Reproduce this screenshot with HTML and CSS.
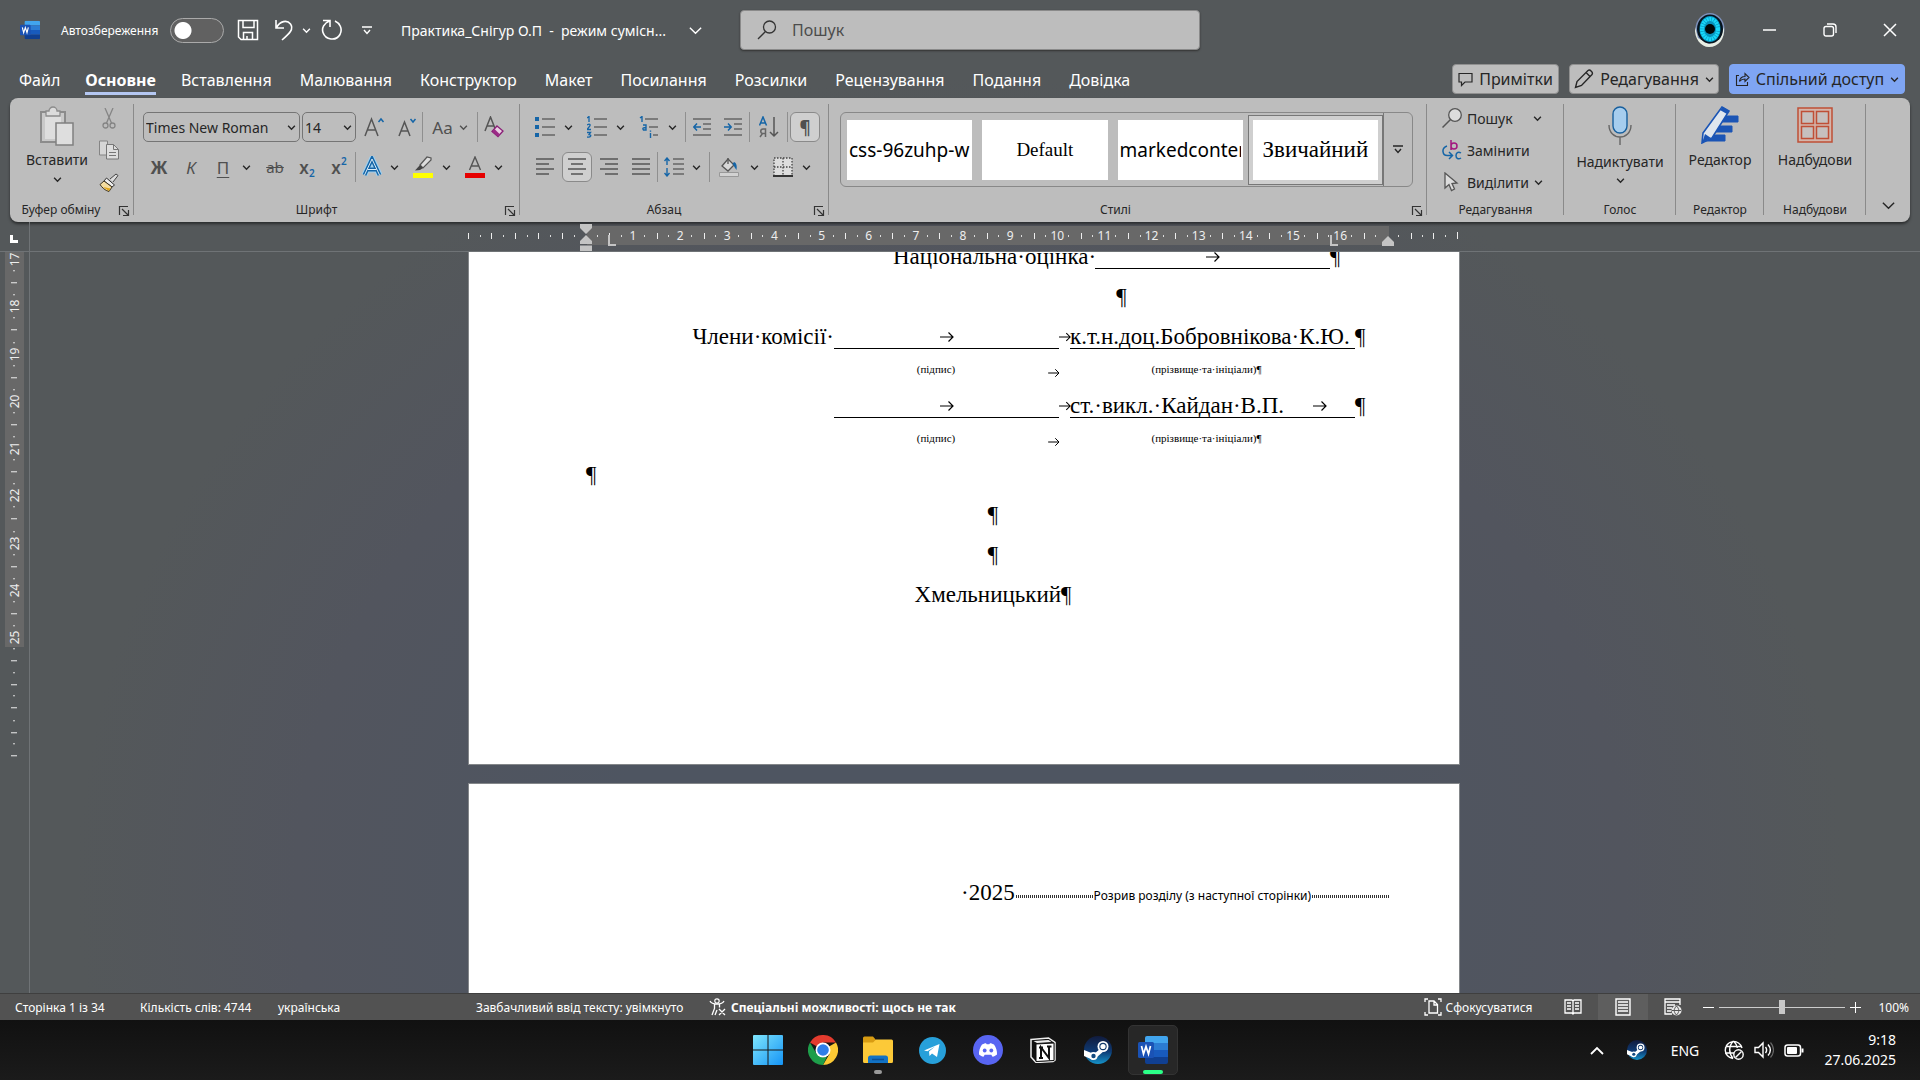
FILE: index.html
```html
<!DOCTYPE html>
<html lang="uk">
<head>
<meta charset="utf-8">
<title>Практика_Снігур О.П - Word</title>
<link rel="stylesheet" href="styles.css">
</head>
<body>
<svg class="sprite" aria-hidden="true">
  <symbol id="chev" viewBox="0 0 8 8"><path d="M1 2.5l3 3 3-3" fill="none" stroke="currentColor" stroke-width="1.4" vector-effect="non-scaling-stroke"/></symbol>
  <symbol id="launch" viewBox="0 0 12 12"><path d="M1.5 10V1.500H10M4 4l6 6M10.500 5v5.500H5" fill="none" stroke="currentColor" stroke-width="1.200"/></symbol>
  <symbol id="tab-arrow" viewBox="0 0 14 12"><path d="M0 6h13M8.500 1.500L13 6l-4.500 4.500" fill="none" stroke="currentColor" stroke-width="1.200"/></symbol>
  <symbol id="word" viewBox="0 0 30 28">
    <path d="M9 0h19a2 2 0 0 1 2 2v5H7V2a2 2 0 0 1 2-2z" fill="#41a5ee"/>
    <path d="M7 7h23v7H7z" fill="#2b7cd3"/><path d="M7 14h23v7H7z" fill="#185abd"/>
    <path d="M7 21h23v5a2 2 0 0 1-2 2H9a2 2 0 0 1-2-2z" fill="#103f91"/>
    <rect y="6" width="16" height="16" rx="1.500" fill="#1a52b5"/>
    <path d="M3.500 10l2 8 2.500-7.500L10.500 18l2-8" fill="none" stroke="#fff" stroke-width="1.700"/>
  </symbol>
  <symbol id="steam" viewBox="0 0 28 28">
    <linearGradient id="sg" x1="0" y1="0" x2="0" y2="1"><stop offset="0" stop-color="#111b3d"/><stop offset=".55" stop-color="#0e3a73"/><stop offset="1" stop-color="#1593c9"/></linearGradient>
    <circle cx="14" cy="14" r="14" fill="url(#sg)"/>
    <path d="M0 14l10 4 7-6 3 3-7 6-4 3-9-4z" fill="#fff"/>
    <circle cx="9.500" cy="20" r="4" fill="#fff"/><circle cx="9.500" cy="20" r="2.200" fill="#124a80"/>
    <circle cx="19" cy="10.500" r="5.500" fill="#fff"/><circle cx="19" cy="10.500" r="3.700" fill="#123a6c"/><circle cx="19" cy="10.500" r="2.600" fill="#fff"/>
  </symbol>
</svg>

<header class="titlebar">
  <svg class="app-icon" viewBox="0 0 30 28"><use href="#word"/></svg>
  <label class="autosave"><span>Автозбереження</span><input type="checkbox" class="switch"></label>
  <div class="quick">
    <button aria-label="Зберегти"><svg width="22" height="22" viewBox="0 0 22 22"><path d="M1.500 1.500h19v19H4l-2.500-2.500zM6 1.500v7h11v-7M6.500 20.500v-7h9v7M10 20v-3" fill="none" stroke="currentColor" stroke-width="1.500"/></svg></button>
    <button aria-label="Скасувати"><svg width="20" height="22" viewBox="0 0 20 22"><path d="M2 1v8h8M2.500 8.500C6 2 13 .5 16.500 5c3.500 5-.5 9-8.500 16" fill="none" stroke="currentColor" stroke-width="1.600"/></svg></button>
    <button class="narrow" aria-label="Список дій"><svg width="9" height="9"><use href="#chev"/></svg></button>
    <button class="redo" aria-label="Повторити"><svg width="22" height="22" viewBox="0 0 22 22"><path d="M2 1.500h7v6.500M8.500 2C3 4 .5 9 2 13.500c2.500 7.500 13 9 17 2C22 9.500 18.500 4 14 2" fill="none" stroke="currentColor" stroke-width="1.600"/></svg></button>
    <button class="customize" aria-label="Налаштувати панель"><svg width="10" height="9" viewBox="0 0 10 9"><path d="M0 1h10M2 4l3 3.500L8 4" fill="none" stroke="currentColor" stroke-width="1.400"/></svg></button>
  </div>
  <button class="doc-title"><span>Практика_Снігур О.П&nbsp; -&nbsp; режим сумісн...</span><svg width="15" height="15"><use href="#chev"/></svg></button>
  <label class="search"><svg width="20" height="20" viewBox="0 0 20 20"><circle cx="12.500" cy="7" r="6" fill="none" stroke="currentColor" stroke-width="1.300"/><path d="M8.500 11.500L1 19" stroke="currentColor" stroke-width="1.300"/></svg><input type="search" placeholder="Пошук" aria-label="Пошук"></label>
  <div class="window-tools">
    <button class="avatar" aria-label="Обліковий запис"><svg width="32" height="36" viewBox="0 0 32 36"><ellipse cx="16" cy="17" rx="14.500" ry="16" fill="#7c90ba"/><path d="M1 15c-1 12 6 20 14 20 10 0 16-8 15-20l-4 12-11 5L4 26z" fill="#e9eee4"/><ellipse cx="16" cy="17" rx="13" ry="14.500" fill="#06141e"/><ellipse cx="16" cy="17" rx="10.500" ry="13" fill="#0793be"/><ellipse cx="16" cy="17" rx="8" ry="10" fill="none" stroke="#18d8fa" stroke-width="4" stroke-dasharray="2 .6"/><circle cx="16" cy="17" r="5" fill="#010708"/></svg></button>
    <button aria-label="Згорнути"><svg width="14" height="14"><path d="M0 7h13" stroke="currentColor" stroke-width="1.500"/></svg></button>
    <button aria-label="Відновити"><svg width="14" height="14" viewBox="0 0 14 14"><rect x="1" y="3.500" width="9.500" height="9.500" rx="2" fill="none" stroke="currentColor" stroke-width="1.400"/><path d="M4 1h6a3 3 0 0 1 3 3v6" fill="none" stroke="currentColor" stroke-width="1.400"/></svg></button>
    <button aria-label="Закрити"><svg width="14" height="14"><path d="M1 1l12 12M13 1L1 13" stroke="currentColor" stroke-width="1.500"/></svg></button>
  </div>
</header>

<nav class="tabs">
  <div class="tab-list">
    <a href="#">Файл</a><a href="#" class="active">Основне</a><a href="#">Вставлення</a><a href="#">Малювання</a><a href="#">Конструктор</a><a href="#">Макет</a><a href="#">Посилання</a><a href="#">Розсилки</a><a href="#">Рецензування</a><a href="#">Подання</a><a href="#">Довідка</a>
  </div>
  <div class="tab-actions">
    <button class="comments"><svg width="15" height="15" viewBox="0 0 15 15"><path d="M1 1.500h13v8.500H7l-3.500 3.500V10H1z" fill="none" stroke="currentColor" stroke-width="1.200"/></svg>Примітки</button>
    <button class="editing"><svg width="20" height="20" viewBox="0 0 20 20"><path d="M1.500 18.500l1.500-6L14 1.500c2-1.500 5.500 2 4 4L7.500 16.500zM12 3.500L16.500 8" fill="none" stroke="currentColor" stroke-width="1.400"/></svg>Редагування<svg width="9" height="9"><use href="#chev"/></svg></button>
    <button class="share"><svg width="15" height="15" viewBox="0 0 15 15"><path d="M4 3.500H1.500v10h11V10M4.500 9.500C5 6 7 4.500 10 4.500V1.500L14 5.500l-4 4V7C7.500 7 6 7.500 4.500 9.500z" fill="none" stroke="currentColor" stroke-width="1.100"/></svg>Спільний доступ<svg width="9" height="9"><use href="#chev"/></svg></button>
  </div>
</nav>

<section class="ribbon">
  <div class="group g-clip">
    <div class="clip-body">
      <button class="paste"><svg width="36" height="40" viewBox="0 0 36 40"><path d="M2 6h24v30H2z" fill="#c9c9c9" stroke="#8c8c8c" stroke-width="2"/><path d="M6 9h16v24H6z" fill="#dedede"/><path d="M7 10V5h3a4 4 0 0 1 8 0h3v5z" fill="#dcdcdc" stroke="#8c8c8c" stroke-width="1.300"/><path d="M17 17h17v22H17z" fill="#dedede" stroke="#808080" stroke-width="1.500"/></svg><span>Вставити</span><svg width="9" height="9"><use href="#chev"/></svg></button>
      <div class="clip-tools">
        <button aria-label="Вирізати"><svg width="14" height="21" viewBox="0 0 14 21"><path d="M3 0l6.500 15M11 0L4.500 15" stroke="#858585" stroke-width="1.300"/><circle cx="3.500" cy="17.500" r="2.500" fill="none" stroke="#858585" stroke-width="1.300"/><circle cx="10.500" cy="17.500" r="2.500" fill="none" stroke="#858585" stroke-width="1.300"/></svg></button>
        <button aria-label="Копіювати"><svg width="22" height="20" viewBox="0 0 22 20"><path d="M1.500 1h8v14h-8z" fill="#d6d6d6" stroke="#858585"/><path d="M8.500 4.500h7l5 5v9.500h-12z" fill="#dedede" stroke="#777"/><path d="M15.500 4.500v5h5M11 12.500h7M11 15.500h7" fill="none" stroke="#777"/></svg></button>
        <button aria-label="Формат за зразком"><svg width="20" height="19" viewBox="0 0 20 19"><path d="M11 6l6-5 2 1.500-5 6.500" fill="#ddd" stroke="#444"/><path d="M7.500 5l8 7-2.500 2-8-6z" fill="#eee" stroke="#333"/><path d="M5 8l8 6-3 4.500c-4-1-7-4-9-7z" fill="#f3dca0" stroke="#3c3320"/><path d="M4 14l6 4 1.500-2.500z" fill="#e0a51a"/></svg></button>
      </div>
    </div>
    <div class="caption"><span>Буфер обміну</span><button aria-label="Буфер обміну"><svg width="12" height="12"><use href="#launch"/></svg></button></div>
  </div>

  <div class="group g-font">
    <div class="tool-row">
      <label class="combo font-name"><select aria-label="Шрифт"><option>Times New Roman</option></select><svg width="9" height="9"><use href="#chev"/></svg></label>
      <label class="combo font-size"><select aria-label="Розмір"><option>14</option></select><svg width="9" height="9"><use href="#chev"/></svg></label>
      <button class="t" aria-label="Збільшити"><svg width="22" height="22" viewBox="0 0 22 22"><path d="M2 20L8.500 3 15 20M4.500 14h8" fill="none" stroke="#555" stroke-width="1.500"/><path d="M15.500 6l2.500-3 2.500 3" fill="none" stroke="#1565a7" stroke-width="1.500"/></svg></button>
      <button class="t" aria-label="Зменшити"><svg width="22" height="22" viewBox="0 0 22 22"><path d="M4 20L9.500 6 15 20M6 15h7" fill="none" stroke="#555" stroke-width="1.500"/><path d="M15.500 3l2.500 3 2.500-3" fill="none" stroke="#1565a7" stroke-width="1.500"/></svg></button>
      <button class="t case sep">Aa<svg width="9" height="9"><use href="#chev"/></svg></button>
      <button class="t sep" aria-label="Очистити"><svg width="22" height="22" viewBox="0 0 22 22"><path d="M2 15L7.500 1 13 15M4 10h7" fill="none" stroke="#555" stroke-width="1.500"/><path d="M14 10l6 5-5 5.500-6-5z" fill="#e8cfe2" stroke="#8a1f77" stroke-width="1.300"/><path d="M11.500 13l5 5-2 2.500-5-5z" fill="#9b2a86"/></svg></button>
    </div>
    <div class="tool-row">
      <button class="t bold">Ж</button><button class="t ital">К</button><button class="t under">П</button><button class="c" aria-label="Підкреслення"><svg width="9" height="9"><use href="#chev"/></svg></button>
      <button class="t strike">ab</button><button class="t script">x<sub>2</sub></button><button class="t script">x<sup>2</sup></button>
      <button class="t sep" aria-label="Текстові ефекти"><svg width="20" height="22" viewBox="0 0 20 22"><path d="M2.500 19L10 3l7.500 16M5.500 13.500h9" fill="none" stroke="#9ed0f0" stroke-width="6"/><path d="M2.500 19L10 3l7.500 16M5.500 13.500h9" fill="none" stroke="#1565a7" stroke-width="3.800"/><path d="M2.500 19L10 3l7.500 16M5.500 13.500h9" fill="none" stroke="#dcecf6" stroke-width="1"/></svg></button><button class="c" aria-label="Ефекти"><svg width="9" height="9"><use href="#chev"/></svg></button>
      <button class="t" aria-label="Виділення"><svg width="20" height="22" viewBox="0 0 20 22"><path d="M7 9l7-8 4 1v2l-8 8z" fill="#ddd" stroke="#555" stroke-width="1.200"/><path d="M7 9l3 3-3 2-5 .5z" fill="#444"/><path d="M0 17h20v5H0z" fill="#ff0"/></svg></button><button class="c" aria-label="Колір виділення"><svg width="9" height="9"><use href="#chev"/></svg></button>
      <button class="t" aria-label="Колір тексту"><svg width="20" height="22" viewBox="0 0 20 22"><path d="M4.500 14L10 1l5.500 13M6.500 10h7" fill="none" stroke="#555" stroke-width="1.400"/><path d="M0 17h20v5H0z" fill="#e60000"/></svg></button><button class="c" aria-label="Вибір кольору"><svg width="9" height="9"><use href="#chev"/></svg></button>
    </div>
    <div class="caption"><span>Шрифт</span><button aria-label="Шрифт"><svg width="12" height="12"><use href="#launch"/></svg></button></div>
  </div>

  <div class="group g-para">
    <div class="tool-row">
      <button class="t" aria-label="Маркери"><svg width="20" height="20" viewBox="0 0 20 20"><path d="M0 0h4v4H0zM0 8h4v4H0zM0 16h4v4H0z" fill="#1565a7"/><path d="M7 2h13M7 10h13M7 18h13" stroke="#666" stroke-width="1.500"/></svg></button><button class="c" aria-label="Маркери"><svg width="9" height="9"><use href="#chev"/></svg></button>
      <button class="t" aria-label="Нумерація"><svg width="20" height="22" viewBox="0 0 20 22"><path d="M0 2l2-1.500V6M0 9c3-2 4 0 2 2l-2 2.500h4M0 16.500h3.500L2 18.500c3 0 2 3.500-2 2.500" fill="none" stroke="#1565a7" stroke-width="1.300"/><path d="M7 3h13M7 11h13M7 19h13" stroke="#666" stroke-width="1.500"/></svg></button><button class="c" aria-label="Нумерація"><svg width="9" height="9"><use href="#chev"/></svg></button>
      <button class="t" aria-label="Багаторівневий"><svg width="20" height="22" viewBox="0 0 20 22"><path d="M1 2l2-1.500V6M4 9h3v5H4.500c-1.500-2 0-2.500 2.500-2.500M11.500 17v5M11.500 14.500v1.200" fill="none" stroke="#1565a7" stroke-width="1.400"/><path d="M6 3h13M10 11h9M14 19h5" stroke="#666" stroke-width="1.500"/></svg></button><button class="c" aria-label="Багаторівневий"><svg width="9" height="9"><use href="#chev"/></svg></button>
      <button class="t sep" aria-label="Зменшити відступ"><svg width="18" height="18" viewBox="0 0 18 18"><path d="M0 1h18M10 6h8M10 11h8M0 17h18" stroke="#666" stroke-width="1.500"/><path d="M8 9H1M4 5.500L.8 9 4 12.500" fill="none" stroke="#1565a7" stroke-width="1.500"/></svg></button>
      <button class="t" aria-label="Збільшити відступ"><svg width="18" height="18" viewBox="0 0 18 18"><path d="M0 1h18M10 6h8M10 11h8M0 17h18" stroke="#666" stroke-width="1.500"/><path d="M0 9h7M4 5.500L7.200 9 4 12.500" fill="none" stroke="#1565a7" stroke-width="1.500"/></svg></button>
      <button class="t sep wide" aria-label="Сортування"><svg width="20" height="22" viewBox="0 0 20 22"><path d="M.5 9.500L4 1l3.500 8.500M2 7h4" fill="none" stroke="#1565a7" stroke-width="1.500"/><path d="M6.500 21v-8H4c-3 0-3 4.500 0 4.500h2.500M3.500 17.500L1 21" fill="none" stroke="#666" stroke-width="1.500"/><path d="M15 1v19M11 16l4 4 4-4" fill="none" stroke="#555" stroke-width="1.500"/></svg></button>
      <button class="t sep pilcrow"><span class="pressed">¶</span></button>
    </div>
    <div class="tool-row">
      <button class="t" aria-label="Ліворуч"><svg width="18" height="18"><path d="M0 1h18M0 6h13M0 11h18M0 16h13" stroke="#555" stroke-width="1.500"/></svg></button>
      <button class="t" aria-label="По центру"><span class="pressed"><svg width="18" height="18"><path d="M0 1h18M3 6h12M0 11h18M3 16h12" stroke="#555" stroke-width="1.500"/></svg></span></button>
      <button class="t" aria-label="Праворуч"><svg width="18" height="18"><path d="M0 1h18M5 6h13M0 11h18M5 16h13" stroke="#555" stroke-width="1.500"/></svg></button>
      <button class="t" aria-label="За шириною"><svg width="18" height="18"><path d="M0 1h18M0 6h18M0 11h18M0 16h18" stroke="#555" stroke-width="1.500"/></svg></button>
      <button class="t sep" aria-label="Інтервал"><svg width="20" height="20" viewBox="0 0 20 20"><path d="M9 2h11M9 7h11M9 12h11M9 17h11" stroke="#666" stroke-width="1.500"/><path d="M3 1v7M.5 4L3 1l2.500 3M3 11v8M.5 16L3 19l2.500-3" fill="none" stroke="#1565a7" stroke-width="1.400"/></svg></button><button class="c" aria-label="Інтервал"><svg width="9" height="9"><use href="#chev"/></svg></button>
      <button class="t sep wide" aria-label="Заливка"><svg width="20" height="20" viewBox="0 0 20 20"><path d="M9 2l6 6-6 6-6-5z" fill="#d8d8d8" stroke="#555" stroke-width="1.300"/><path d="M9 1v6" stroke="#555" stroke-width="1.300"/><path d="M15 5c3 1 3 5 2.500 8-2-2-2.500-5-4-6z" fill="#1565a7"/><path d="M.5 15.500h19v4H.5z" fill="#d2d2d2" stroke="#999"/></svg></button><button class="c" aria-label="Заливка"><svg width="9" height="9"><use href="#chev"/></svg></button>
      <button class="t" aria-label="Межі"><svg width="20" height="20" viewBox="0 0 20 20"><path d="M1 1h18v18H1z" fill="#ddd"/><path d="M1 19V1h18v18M10 1v18M1 10h18" fill="none" stroke="#444" stroke-width="1.300" stroke-dasharray="1.500 1.500"/><path d="M0 19h20" stroke="#333" stroke-width="2"/></svg></button><button class="c" aria-label="Межі"><svg width="9" height="9"><use href="#chev"/></svg></button>
    </div>
    <div class="caption"><span>Абзац</span><button aria-label="Абзац"><svg width="12" height="12"><use href="#launch"/></svg></button></div>
  </div>

  <div class="group g-styles">
    <div class="gallery">
      <button class="style sans"><span>css-96zuhp-w</span></button>
      <button class="style centered small"><span>Default</span></button>
      <button class="style sans"><span>markedcontent</span></button>
      <button class="style centered selected"><span>Звичайний</span></button>
      <button class="more" aria-label="Більше стилів"><svg width="10" height="9" viewBox="0 0 10 9"><path d="M0 1h10M2 4l3 3.500L8 4" fill="none" stroke="currentColor" stroke-width="1.400"/></svg></button>
    </div>
    <div class="caption"><span>Стилі</span><button aria-label="Стилі"><svg width="12" height="12"><use href="#launch"/></svg></button></div>
  </div>

  <div class="group g-edit">
    <div class="edit-list">
      <button><svg width="20" height="20" viewBox="0 0 20 20"><circle cx="13" cy="7" r="6.300" fill="#dcdcdc" stroke="#555" stroke-width="1.300"/><path d="M8.500 11.500L.5 19.500" stroke="#555" stroke-width="1.500"/></svg><span>Пошук</span><svg class="far" width="9" height="9"><use href="#chev"/></svg></button>
      <button><svg width="20" height="20" viewBox="0 0 20 20"><path d="M9 0v10M9 6c0-4 6-4 6 0s-6 4-6 0" fill="none" stroke="#a3177f" stroke-width="1.500"/><path d="M19 13c-3-2-5 0-5 2.500s2 4.500 5 2.500M5 6C-1 8 0 16 6 15.500h4M7 12l3.500 3.500L7 19" fill="none" stroke="#1565a7" stroke-width="1.500"/></svg><span>Замінити</span></button>
      <button><svg width="20" height="20" viewBox="0 0 20 20"><path d="M3 1v15l4-3.500 2.500 6 3-1.500-2.500-5.500 5-.5z" fill="#dcdcdc" stroke="#555" stroke-width="1.300"/></svg><span>Виділити</span><svg width="9" height="9"><use href="#chev"/></svg></button>
    </div>
    <div class="caption"><span>Редагування</span></div>
  </div>
  <div class="group g-voice">
    <button class="big"><svg width="24" height="40" viewBox="0 0 24 40"><rect x="5" y="1" width="14" height="26" rx="7" fill="#a6cdee" stroke="#175f9d" stroke-width="1.400"/><path d="M1 19c0 16 22 16 22 0M12 31v8" fill="none" stroke="#666" stroke-width="1.400"/></svg><span>Надиктувати</span><svg width="9" height="9"><use href="#chev"/></svg></button>
    <div class="caption"><span>Голос</span></div>
  </div>
  <div class="group g-editor">
    <button class="big"><svg width="40" height="38" viewBox="0 0 40 38"><path d="M20 10h18v6H14zM17 20h15v6H10zM11 29h14v6H6z" fill="#1b55b5" stroke="#1b55b5" stroke-linejoin="round"/><path d="M3 27L22 1l7 4-17 27-10 5z" fill="#dfe6ee" stroke="#1b55b5" stroke-width="1.600"/><path d="M2 37l3-9 6 4zM20 4l3-3 6 4-2 3z" fill="#1b55b5"/></svg><span>Редактор</span></button>
    <div class="caption"><span>Редактор</span></div>
  </div>
  <div class="group g-addins">
    <button class="big"><svg width="38" height="38" viewBox="0 0 38 38"><path d="M2 2h34v34H2z" fill="#d4b5ab" stroke="#bf4f36" stroke-width="1.500"/><path d="M5.500 5.500h12v12h-12zM20.500 5.500h12v12h-12zM5.500 20.500h12v12h-12zM20.500 20.500h12v12h-12z" fill="#c6c0be" stroke="#bf4f36" stroke-width="1.500"/></svg><span>Надбудови</span></button>
    <div class="caption"><span>Надбудови</span></div>
  </div>
  <button class="collapse" aria-label="Згорнути стрічку"><svg width="15" height="15"><use href="#chev"/></svg></button>
</section>

<main class="workspace">
  <div class="corner"><i></i></div>
  <div class="ruler-bar">
    <div class="ruler">
      <span class="blank"></span><span class="blank"></span><span></span><span>1</span><span>2</span><span>3</span><span>4</span><span>5</span><span>6</span><span>7</span><span>8</span><span>9</span><span>10</span><span>11</span><span>12</span><span>13</span><span>14</span><span>15</span><span>16</span><span></span><span class="blank last"></span>
      <svg class="mark indent-left" width="12" height="27" viewBox="0 0 12 27"><path d="M0 0h12v4l-6 6-6-6zM0 20v-3l6-6 6 6v3zM0 21.500h12V27H0z" fill="#c4c4c4"/></svg>
      <svg class="mark tab-a" width="8" height="12"><path d="M1 0v10h7" fill="none" stroke="#c4c4c4" stroke-width="2"/></svg>
      <svg class="mark tab-b" width="8" height="12"><path d="M1 0v10h7" fill="none" stroke="#c4c4c4" stroke-width="2"/></svg>
      <svg class="mark indent-right" width="12" height="10"><path d="M0 10V6l6-6 6 6v4z" fill="#c4c4c4"/></svg>
    </div>
  </div>
  <div class="vruler-bar">
    <div class="vruler"><span>17</span><span>18</span><span>19</span><span>20</span><span>21</span><span>22</span><span>23</span><span>24</span><span>25</span><span class="blank"></span><span class="blank"></span></div>
  </div>
  <div class="canvas">
    <article class="sheet first">
      <div class="line grade"><span>Національна·оцінка·</span><u class="field"><svg width="14" height="12"><use href="#tab-arrow"/></svg></u><span>¶</span></div>
      <div class="line mid-right">¶</div>
      <div class="line sign"><span>Члени·комісії·</span><u class="field"><svg width="14" height="12"><use href="#tab-arrow"/></svg></u><svg width="12" height="12"><use href="#tab-arrow"/></svg><span class="name">к.т.н.доц.Бобровнікова·К.Ю.</span><span>¶</span></div>
      <div class="line note"><span>(підпис)</span><svg width="12" height="10"><use href="#tab-arrow"/></svg><span>(прізвище·та·ініціали)¶</span></div>
      <div class="line sign"><span></span><u class="field"><svg width="14" height="12"><use href="#tab-arrow"/></svg></u><svg width="12" height="12"><use href="#tab-arrow"/></svg><span class="name">ст.·викл.·Кайдан·В.П.<svg width="14" height="12"><use href="#tab-arrow"/></svg></span><span>¶</span></div>
      <div class="line note"><span>(підпис)</span><svg width="12" height="10"><use href="#tab-arrow"/></svg><span>(прізвище·та·ініціали)¶</span></div>
      <div class="line">¶</div>
      <div class="line center">¶</div>
      <div class="line center">¶</div>
      <div class="line center">Хмельницький¶</div>
    </article>
    <article class="sheet second">
      <div class="line break"><span>·2025</span><i></i><small>Розрив розділу (з наступної сторінки)</small><i></i></div>
    </article>
  </div>
</main>

<footer class="status">
  <button class="s-page">Сторінка 1 із 34</button>
  <button class="s-words">Кількість слів: 4744</button>
  <button class="s-lang">українська</button>
  <button class="s-pred">Завбачливий ввід тексту: увімкнуто</button>
  <button class="s-access"><svg width="18" height="18" viewBox="0 0 18 18"><circle cx="8" cy="3" r="2.200" fill="none" stroke="currentColor" stroke-width="1.200"/><path d="M1 3c2 4 12 4 14 0M5.500 6.500v4L3 17M10.500 6.500v3M6 17l2-5M10 11l6 6M16 11l-6 6" fill="none" stroke="currentColor" stroke-width="1.300"/></svg>Спеціальні можливості: щось не так</button>
  <div class="status-right">
    <button class="focus"><svg width="18" height="18" viewBox="0 0 18 18"><path d="M1 4V1h3M14 1h3v3M17 14v3h-3M4 17H1v-3M5 3h5l3.500 3.500V15H5zM10 3v4h3.500" fill="none" stroke="currentColor" stroke-width="1.300"/></svg>Сфокусуватися</button>
    <button class="view" aria-label="Читання"><svg width="18" height="16" viewBox="0 0 18 16"><path d="M1 1h7l1 1 1-1h7v13h-7l-1 1-1-1H1zM9 2v12M3 4h4M3 7h4M3 10h4M11 4h4M11 7h4M11 10h4" fill="none" stroke="currentColor" stroke-width="1.300"/></svg></button>
    <button class="view on" aria-label="Розмітка"><svg width="16" height="18" viewBox="0 0 16 18"><path d="M1 1h14v16H1zM3 4h10M3 7h10M3 10h10M3 13h10" fill="none" stroke="currentColor" stroke-width="1.400"/></svg></button>
    <button class="view" aria-label="Веб"><svg width="18" height="18" viewBox="0 0 18 18"><path d="M8 16H1V1h15v6M1 4h15M3 7h8M3 10h5M3 13h4" fill="none" stroke="currentColor" stroke-width="1.300"/><circle cx="12.500" cy="12.500" r="5" fill="#e8e8e8"/><path d="M8 12.500h9M12.500 8c-3 3-3 6 0 9 3-3 3-6 0-9" fill="none" stroke="#555"/></svg></button>
    <button class="zoom-step" aria-label="Зменшити масштаб"><svg width="11" height="11"><path d="M0 5.500h11" stroke="currentColor"/></svg></button>
    <input type="range" class="zoom" min="0" max="100" value="50" aria-label="Масштаб">
    <button class="zoom-step" aria-label="Збільшити масштаб"><svg width="11" height="11"><path d="M0 5.500h11M5.500 0v11" stroke="currentColor"/></svg></button>
    <button class="percent">100%</button>
  </div>
</footer>

<div class="taskbar">
  <div class="apps">
    <button aria-label="Пуск"><svg width="30" height="30" viewBox="0 0 30 30"><linearGradient id="wg" x1="0" y1="0" x2="1" y2="1"><stop offset="0" stop-color="#7fe6fd"/><stop offset="1" stop-color="#1594f5"/></linearGradient><path d="M0 1a1 1 0 0 1 1-1h13.500v14.500H0zM15.500 0H29a1 1 0 0 1 1 1v13.500H15.500zM0 15.500h14.500V30H1a1 1 0 0 1-1-1zM15.500 15.500H30V29a1 1 0 0 1-1 1H15.500z" fill="url(#wg)"/></svg></button>
    <button aria-label="Chrome"><svg width="30" height="30" viewBox="0 0 30 30"><path d="M15 15L2 7.500A15 15 0 0 1 28 7.500H15z" fill="#e33b2e"/><path d="M15 15L28 7.500A15 15 0 0 1 15 30l6.500-11z" fill="#fcc934"/><path d="M15 30A15 15 0 0 1 2 7.500L8.500 18.800 15 22.500l4-1z" fill="#1e9e4a"/><circle cx="15" cy="15" r="7.500" fill="#fff"/><circle cx="15" cy="15" r="5.800" fill="#2f7de9"/></svg></button>
    <button class="running" aria-label="Провідник"><svg width="30" height="28" viewBox="0 0 30 28"><path d="M0 2a1.500 1.500 0 0 1 1.500-1.500H10l3 3.500v5H0z" fill="#d89c12"/><path d="M0 6.500h10l3-3h15.500A1.500 1.500 0 0 1 30 5v20.500a1.500 1.500 0 0 1-1.500 1.500h-27A1.500 1.500 0 0 1 0 25.500z" fill="#fcc938"/><path d="M5 27v-5a2.500 2.500 0 0 1 2.500-2.500h15A2.500 2.500 0 0 1 25 22v5z" fill="#1272c4"/><path d="M9 23.500h12" stroke="#0b4f94" stroke-width="1.500"/></svg></button>
    <button aria-label="Telegram"><svg width="27" height="27" viewBox="0 0 27 27"><circle cx="13.500" cy="13.500" r="13.500" fill="#27a0da"/><path d="M5 13.500L20.500 7 18 20l-5-3.500-2.500 2.500-.5-4.500 6-5-7.500 4.800z" fill="#fff"/></svg></button>
    <button aria-label="Discord"><svg width="30" height="30" viewBox="0 0 30 30"><circle cx="15" cy="15" r="15" fill="#5865f2"/><path d="M9 9.500c2-1 3-1.300 4-1.300l.7 1.100h2.600l.7-1.100c1 0 2 .3 4 1.300 2 3 3.300 6.500 3 10-1.500 1.200-3 2-4.500 2.200l-1.200-1.900h-6.600l-1.200 1.900C9 21.500 7.500 20.700 6 19.500c-.3-3.500 1-7 3-10z" fill="#fff"/><circle cx="11.700" cy="15.500" r="1.900" fill="#5865f2"/><circle cx="18.300" cy="15.500" r="1.900" fill="#5865f2"/></svg></button>
    <button aria-label="Notion"><svg width="26" height="26" viewBox="0 0 26 26"><path d="M1 2.500L18.500 1 25 5.500V23l-2 1.500L6 25.500 1 20z" fill="#111" stroke="#eee" stroke-width="1.500"/><path d="M6 7l18-1v17.500L6 24.500z" fill="#fff" stroke="#111"/><path d="M9 10.500h4M11 20.500V10.500l8 10.500V9.500M17 9.500h4.500M9 21h4" fill="none" stroke="#111" stroke-width="2"/><path d="M3.500 4l15-1 3 2L7 6z" fill="#eee"/></svg></button>
    <button aria-label="Steam"><svg width="28" height="28"><use href="#steam"/></svg></button>
    <button class="current" aria-label="Word"><svg width="30" height="28"><use href="#word"/></svg></button>
  </div>
  <div class="tray">
    <button class="t-up" aria-label="Показати приховані"><svg width="14" height="9" viewBox="0 0 14 9"><path d="M1 8l6-6 6 6" fill="none" stroke="currentColor" stroke-width="1.800"/></svg></button>
    <button class="t-steam" aria-label="Steam"><svg width="20" height="20" viewBox="0 0 28 28"><use href="#steam"/></svg></button>
    <button class="t-lang">ENG</button>
    <button class="t-net" aria-label="Мережа, звук, батарея">
      <svg width="20" height="20" viewBox="0 0 20 20"><path d="M18 8a8.500 8.500 0 1 0-9 10.500M1.500 6.500h16M1 13h9M9.500 1c-5 5-5 12-.5 17.500M9.500 1c2 2 3.500 4.500 3.800 7" fill="none" stroke="currentColor" stroke-width="1.400"/><circle cx="14.500" cy="14.500" r="4.700" fill="none" stroke="currentColor" stroke-width="1.400"/><path d="M11.500 17.500l6-6" stroke="currentColor" stroke-width="1.400"/></svg>
      <svg width="20" height="18" viewBox="0 0 20 18"><path d="M1 6.500h3.500L9 2v14l-4.500-4.500H1z" fill="none" stroke="currentColor" stroke-width="1.400"/><path d="M11.500 6c1.500 2 1.500 4 0 6M14 3.500c3 3.500 3 7.500 0 11" fill="none" stroke="currentColor" stroke-width="1.400"/><path d="M16.500 1.500c4 4.500 4 10.500 0 15" fill="none" stroke="#666" stroke-width="1.200"/></svg>
      <svg width="20" height="13" viewBox="0 0 20 13"><rect x="1" y="1" width="15.500" height="11" rx="2.500" fill="none" stroke="currentColor" stroke-width="1.500"/><rect x="3" y="3" width="10" height="7" rx="1" fill="currentColor"/><path d="M18.500 4.500v4" stroke="currentColor" stroke-width="2"/></svg>
    </button>
    <button class="clock"><span>9:18</span><span>27.06.2025</span></button>
  </div>
</div>
</body>
</html>
```
FILE: styles.css
```css
* { box-sizing: border-box; }
body {
  margin: 0;
  height: 100vh;
  display: flex;
  flex-direction: column;
  overflow: hidden;
  font-family: "Noto Sans", "Open Sans", sans-serif;
  font-size: 14px;
  color: #262626;
  background: radial-gradient(ellipse 46% 75% at 50% 82%, #4e5561 0%, #4e5561 40%, #52555e 75%, #54585a 100%);
}
button, input, select { font: inherit; color: inherit; }
button {
  border: 0;
  padding: 0;
  background: none;
  display: flex;
  align-items: center;
  justify-content: center;
  white-space: nowrap;
}
a { color: inherit; text-decoration: none; }
svg { flex: none; display: block; }
.sprite { position: absolute; width: 0; height: 0; }

/* Title bar */
.titlebar {
  position: relative;
  display: flex;
  align-items: center;
  height: 60px;
  flex: none;
  padding: 0 0 0 20px;
  color: #fff;
}
.app-icon { width: 20px; height: 20px; }
.autosave { display: flex; align-items: center; gap: 8px; margin-left: 21px; font-size: 12px; width: 163px; justify-content: space-between; }
.switch {
  appearance: none;
  margin: 0;
  width: 54px;
  height: 25px;
  border: 1px solid #aaa;
  border-radius: 13px;
  background: radial-gradient(circle at 12px 50%, #fff 8px, #616161 9px);
}
.quick { display: flex; align-items: center; margin-left: 6px; width: 171px; }
.quick button { width: 36px; height: 30px; }
.quick .narrow { width: 9px; }
.quick .redo { width: 42px; }
.quick .customize { width: 28px; }
.doc-title { font-size: 14px; width: 302px; height: 30px; justify-content: space-between; }
.search {
  position: absolute;
  left: 740px;
  top: 10px;
  width: 460px;
  height: 40px;
  display: flex;
  align-items: center;
  gap: 15px;
  padding: 0 16px;
  border: 1px solid #8a8a8a;
  border-radius: 4px;
  background: #bdbdbd;
  color: #333;
  box-shadow: 0 1px 2px #333;
}
.search input { flex: 1; min-width: 0; border: 0; padding: 0; background: none; font-size: 16px; outline: 0; }
.search input::placeholder { color: #4c4c4c; opacity: 1; }
.window-tools { margin-left: auto; display: flex; align-items: center; }
.window-tools button { width: 60px; height: 40px; }

/* Tabs */
.tabs { display: flex; justify-content: space-between; height: 38px; flex: none; padding: 4px 15px 0 19px; color: #fff; }
.tab-list { display: flex; gap: 28px; font-size: 16px; }
.tab-list a { height: 31px; line-height: 32px; border-bottom: 3px solid transparent; }
.tab-list .active { font-weight: 700; border-color: #b4c7f2; margin: 0 -3px; }
.tab-actions { display: flex; gap: 10px; height: 30px; color: #262626; font-size: 16px; }
.tab-actions button { gap: 6px; border: 1px solid #909090; border-radius: 4px; background: #bdbdbd; }
.comments { width: 107px; }
.editing { width: 150px; }
.tab-actions .share { width: 176px; background: #7fa5f3; border-color: #7fa5f3; }

/* Ribbon */
.ribbon {
  display: flex;
  height: 124px;
  flex: none;
  margin: 0 10px;
  border-radius: 8px;
  background: #bdbdbd;
  box-shadow: 0 2px 3px rgba(0, 0, 0, .5);
}
.group { position: relative; display: flex; flex-direction: column; padding: 14px 8px 4px 9px; flex: none; }
.group::after { content: ""; position: absolute; right: 0; top: 6px; bottom: 7px; width: 1px; background: #8a8a8a; }
.ribbon .g-clip { width: 124px; padding: 8px 0 4px 8px; }
.g-font { width: 386px; }
.g-para { width: 309px; }
.ribbon .g-styles { flex: 1; padding: 14px 14px 4px 11px; }
.g-edit { width: 137px; }
.g-voice { width: 112px; }
.g-editor { width: 88px; }
.g-addins { width: 102px; }
.g-edit, .g-voice, .g-editor, .g-addins { padding: 8px 0 4px; }
.caption { margin-top: auto; display: flex; align-items: center; justify-content: center; height: 17px; font-size: 12px; line-height: 17px; }
.g-font .caption, .g-para .caption, .g-styles .caption { padding-right: 22px; }
.g-clip .caption { padding-right: 30px; }
.caption button { position: absolute; right: 4px; bottom: 5px; color: #333; }
.tool-row { display: flex; align-items: center; height: 30px; margin-bottom: 10px; }
.t { width: 32px; height: 30px; flex: none; color: #505050; font-size: 17px; }
.c { width: 20px; height: 30px; flex: none; justify-content: flex-start; padding-left: 3px; }
.t.wide { width: 38px; }
.sep { border-left: 1px solid #8f8f8f; }
.combo { display: flex; align-items: center; height: 30px; border: 1px solid #757575; border-radius: 5px; padding: 0 3px 0 2px; margin-right: 2px; }
.combo select { appearance: none; border: 0; background: none; padding: 0; flex: 1; min-width: 0; font-size: 14px; }
.font-name { width: 157px; }
.font-size { width: 54px; }
.t.case { width: 55px; gap: 6px; }
.bold { font-weight: 700; }
.ital { font-style: italic; }
.under { text-decoration: underline; text-underline-offset: 3px; }
.t.strike { text-decoration: line-through; font-size: 15px; }
.script sub, .script sup { font-size: 10px; line-height: 10px; color: #1565a7; }
.script { font-weight: 600; }
.script sub { align-self: flex-end; margin-bottom: 4px; }
.script sup { align-self: flex-start; margin-top: 4px; }
.t.pilcrow { width: 35px; font-weight: 700; }
.pressed { display: flex; align-items: center; justify-content: center; width: 30px; height: 30px; flex: none; border: 1px solid #8a8a8a; border-radius: 6px; background: #cfcfcf; }

.clip-body { display: flex; }
.paste { flex-direction: column; justify-content: flex-start; width: 78px; height: 84px; }
.paste span { line-height: 20px; margin-top: 4px; margin-bottom: 5px; }
.clip-tools { display: flex; flex-direction: column; gap: 8px; }
.clip-tools button { height: 24px; width: 26px; }

.gallery { display: flex; align-items: center; height: 75px; border: 1px solid #888; border-radius: 6px; padding-left: 1px; }
.style { flex: 1; min-width: 0; height: 70px; padding: 4px; border: 1px solid transparent; font: 23px "Liberation Serif", serif; color: #000; }
.style span { flex: 1; min-width: 0; height: 60px; line-height: 60px; background: #fff; overflow: hidden; text-align: left; padding-left: 2px; border-right: 2px solid #fff; }
.style.sans { font: 19px "Noto Sans", sans-serif; }
.style.centered span { text-align: center; }
.style.small { font-size: 19px; }
.style.selected { border-color: #777; background: #cfcfcf; }
.more { width: 29px; height: 73px; border-left: 1px solid #777; }

.edit-list { display: flex; flex-direction: column; gap: 8px; padding-left: 15px; }
.edit-list button { height: 24px; justify-content: flex-start; gap: 5px; }
.edit-list .far { margin-left: 15px; }
.big { flex-direction: column; }
.big span { line-height: 20px; margin-top: 6px; margin-bottom: 4px; }
.collapse { width: 44px; align-items: flex-end; padding-bottom: 9px; }

/* Workspace */
.workspace { flex: 1; min-height: 0; display: grid; grid-template-columns: 30px 1fr; grid-template-rows: 30px 1fr; }
.corner { border-right: 1px solid #6f7376; border-bottom: 1px solid #6f7376; padding: 13px 0 0 10px; }
.corner i { display: block; width: 8px; height: 8px; border: solid #fff; border-width: 0 0 3px 3px; }
.ruler-bar { display: flex; justify-content: center; padding: 4px 24px 0 0; border-bottom: 1px solid #6f7376; }
.ruler {
  position: relative;
  display: grid;
  grid-template-columns: repeat(21, 1fr);
  width: 990px;
  height: 19px;
  color: #eee;
  font: 12px/19px "Noto Sans", sans-serif;
  background: linear-gradient(90deg, transparent 12%, #686868 12%, #686868 93%, transparent 93%);
}
.ruler span {
  text-align: center;
  background:
    linear-gradient(#eee, #eee) 0 50% / 1px 6px no-repeat,
    linear-gradient(#ddd, #ddd) 25% 50% / 1px 2px no-repeat,
    linear-gradient(#ddd, #ddd) 75% 50% / 1px 2px no-repeat;
}
.ruler .blank {
  background:
    linear-gradient(#eee, #eee) 0 50% / 1px 6px no-repeat,
    linear-gradient(#eee, #eee) 50% 50% / 1px 6px no-repeat,
    linear-gradient(#ddd, #ddd) 25% 50% / 1px 2px no-repeat,
    linear-gradient(#ddd, #ddd) 75% 50% / 1px 2px no-repeat;
}
.ruler .last { border-right: 1px solid #eee; border-image: linear-gradient(transparent 35%, #eee 35%, #eee 65%, transparent 65%) 1; }
.mark { position: absolute; }
.indent-left { left: 112px; top: -2px; }
.tab-a { left: 140px; top: 9px; }
.tab-b { left: 862px; top: 9px; }
.indent-right { left: 914px; top: 10px; }
.vruler-bar { border-right: 1px solid #6f7376; overflow: hidden; padding-left: 5px; }
.vruler {
  display: grid;
  grid-template-rows: repeat(11, 1fr);
  width: 19px;
  height: 520px;
  margin-top: -16px;
  color: #eee;
  font: 12px/19px "Noto Sans", sans-serif;
  background: linear-gradient(#686868 79%, transparent 79%);
}
.vruler span {
  writing-mode: vertical-rl;
  transform: rotate(180deg);
  text-align: center;
  background:
    linear-gradient(#eee, #eee) 50% 0 / 6px 1px no-repeat,
    linear-gradient(#ddd, #ddd) 50% 25% / 2px 1px no-repeat,
    linear-gradient(#ddd, #ddd) 50% 75% / 2px 1px no-repeat;
}
.vruler .blank {
  background:
    linear-gradient(#eee, #eee) 50% 0 / 6px 1px no-repeat,
    linear-gradient(#eee, #eee) 50% 50% / 6px 1px no-repeat,
    linear-gradient(#ddd, #ddd) 50% 25% / 2px 1px no-repeat,
    linear-gradient(#ddd, #ddd) 50% 75% / 2px 1px no-repeat;
}
.canvas { overflow: hidden; display: flex; flex-direction: column; align-items: center; gap: 20px; padding-right: 22px; }

/* Document */
.sheet { width: 990px; flex: none; background: #fff; color: #000; padding: 0 69px 0 117px; font: 23px/40px "Liberation Serif", "Times New Roman", serif; outline: 1px solid #84878a; }
.first { margin-top: -15px; height: 527px; }
.sheet.second { height: 1403px; padding-top: 89px; }
.line { height: 40px; white-space: nowrap; }
.grade { display: grid; grid-template-columns: 202px 235px auto; margin-left: 307px; }
.mid-right { padding-left: 267px; text-align: center; }
.sign { display: grid; grid-template-columns: 248px 225px 11px 285px auto; align-items: start; }
.sign > span:first-child { text-align: right; }
.sign > svg { margin-top: 14px; }
.field { display: flex; align-items: center; justify-content: center; height: 32px; padding-top: 8px; border-bottom: 1px solid #000; text-decoration: none; }
.name { display: flex; align-items: flex-start; gap: 29px; height: 32px; border-bottom: 1px solid #000; }
.name svg { margin-top: 14px; }
.line.note { display: grid; grid-template-columns: 204px 32px 273px; padding-left: 248px; height: 29px; line-height: 25px; font-size: 11px; text-align: center; align-items: start; }
.note svg { justify-self: center; margin-top: 11px; }
.center { text-align: center; padding-left: 10px; }
.break { display: flex; align-items: center; padding-left: 375px; }
.break i { flex: 1; height: 3px; margin: 7px 1px 0; background: repeating-linear-gradient(90deg, #333 0 1px, transparent 1px 2px); }
.break small { font: 12px/20px "Noto Sans", sans-serif; margin-top: 6px; }

/* Status bar */
.status { display: flex; align-items: center; height: 27px; flex: none; background: #525252; border-top: 1px solid #3f3f3f; color: #fff; font-size: 12px; padding: 0 11px 0 15px; }
.status > button { justify-content: flex-start; }
.s-page { width: 125px; }
.s-words { width: 138px; }
.s-lang { width: 198px; }
.s-pred { width: 233px; }
.s-access { gap: 4px; font-weight: 700; }
.status-right { margin-left: auto; display: flex; align-items: center; height: 26px; }
.focus { gap: 4px; margin-right: 16px; }
.view { width: 50px; height: 26px; }
.view.on { background: #5e5e5e; }
.zoom-step { width: 21px; height: 26px; }
.zoom { appearance: none; margin: 0; width: 126px; height: 16px; background: linear-gradient(#ccc, #ccc) 0 50% / 100% 1px no-repeat; }
.zoom::-webkit-slider-thumb { appearance: none; width: 6px; height: 14px; background: #c8c8c8; }
.percent { margin-left: 12px; }

/* Taskbar */
.taskbar { position: relative; display: flex; justify-content: center; height: 60px; flex: none; background: linear-gradient(#111, #1b1b1b); color: #fff; }
.apps { display: flex; align-items: center; gap: 5px; }
.apps button { position: relative; width: 50px; height: 50px; border-radius: 5px; }
.apps .current { background: #272727; border: 1px solid #333; }
.running::after, .current::after { content: ""; position: absolute; bottom: 1px; left: 21px; width: 8px; height: 4px; border-radius: 2px; background: #999; }
.current::after { left: 14px; width: 20px; bottom: 0; background: #2bff88; }
.tray { position: absolute; right: 24px; top: 0; height: 60px; display: flex; align-items: center; font-size: 14px; }
.t-up { width: 40px; }
.t-steam { width: 40px; }
.t-lang { width: 56px; }
.t-net { gap: 10px; width: 90px; margin-left: 6px; }
.clock { flex-direction: column; align-items: flex-end; width: 87px; line-height: 20px; }
```
